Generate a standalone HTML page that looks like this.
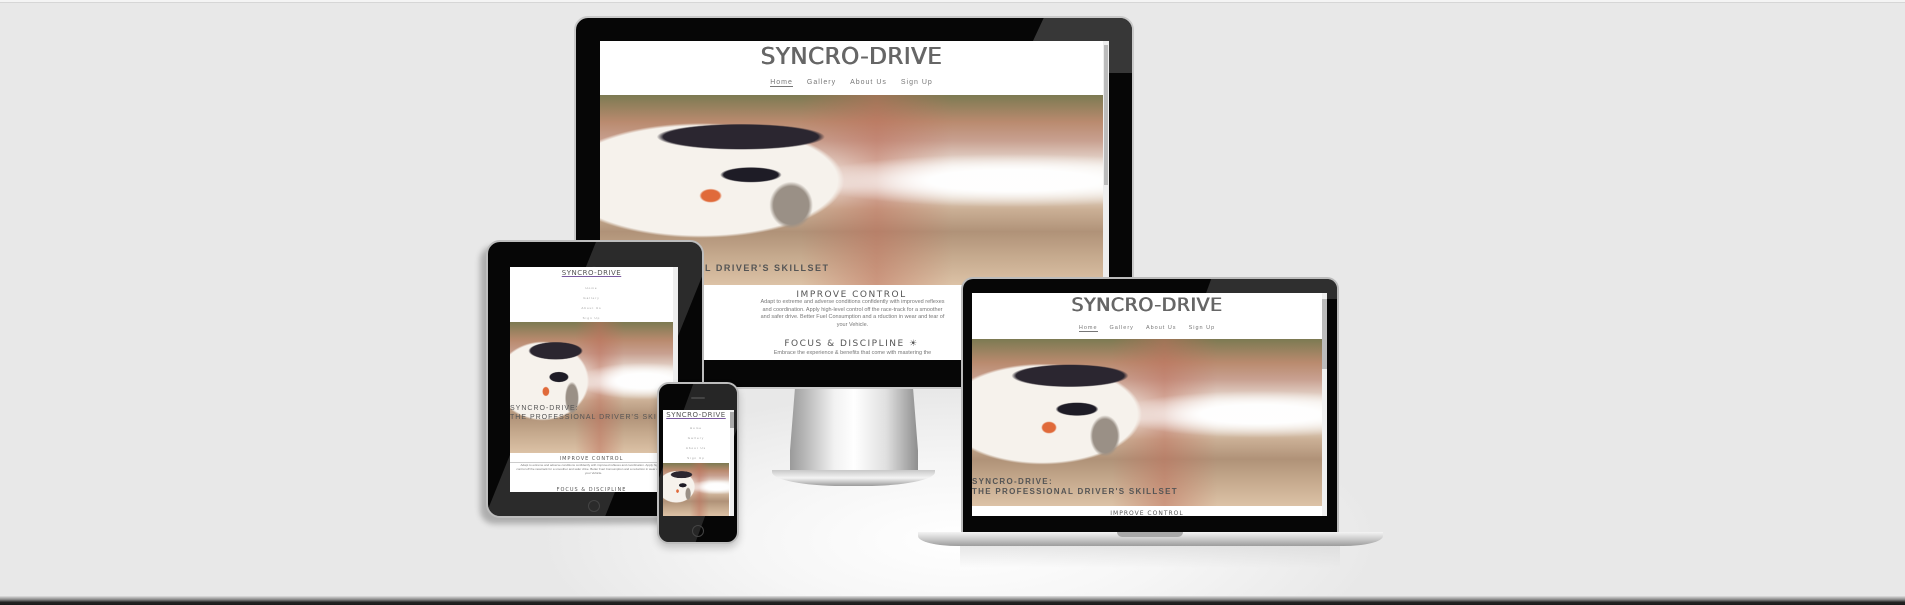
<!DOCTYPE html>
<html><head><meta charset="utf-8"><style>
*{margin:0;padding:0;box-sizing:border-box}
body{width:1905px;height:605px;overflow:hidden;position:relative;font-family:"Liberation Sans",sans-serif;
background:radial-gradient(ellipse 420px 150px at 960px 540px,#ffffff 0%,#f6f6f6 50%,rgba(232,232,232,0) 100%),#e8e8e8}
.a{position:absolute}
.topline{left:0;top:0;width:1905px;height:3px;background:#f4f4f4;border-bottom:1px solid #d6d6d6}
.bot{left:0;top:596px;width:1905px;height:9px;background:linear-gradient(#e0e0e0,#888 40%,#222 70%,#1a1a1a)}
.hero{position:absolute;overflow:hidden;
background:
radial-gradient(ellipse 3% 5% at 22% 53%,#e06a3a 60%,transparent 75%),
radial-gradient(ellipse 9% 6% at 30% 42%,#1e1c26 60%,transparent 68%),
radial-gradient(ellipse 22% 9% at 28% 22%,#2b2630 70%,transparent 76%),
radial-gradient(ellipse 7% 20% at 38% 58%,#9a9086 50%,transparent 62%),
radial-gradient(ellipse 34% 36% at 20% 45%,#f6f2ec 80%,transparent 84%),
radial-gradient(ellipse 42% 14% at 82% 45%,rgba(255,255,255,.97) 40%,rgba(255,255,255,0) 100%),
linear-gradient(90deg,rgba(0,0,0,0) 40%,rgba(190,110,90,.5) 55%,rgba(0,0,0,0) 70%),
linear-gradient(180deg,#7c7a52 0%,#b98a6e 14%,#c8a090 24%,#eee6de 38%,#f4efe9 48%,#cbb096 60%,#b09278 72%,#c4a88c 84%,#dcc2a6 100%)}
.ttl{color:#666;text-align:center;font-family:"DejaVu Sans",sans-serif;letter-spacing:.5px;white-space:nowrap}
.big{text-shadow:.5px 0 0 #666,-.3px 0 0 #666}
.nav{color:#777;text-align:center;letter-spacing:1px;white-space:nowrap}
.nav span{display:inline-block}
</style></head><body>
<div class="a topline"></div>

<!-- monitor stand -->
<div class="a" style="left:790px;top:386px;width:128px;height:86px;background:linear-gradient(90deg,#9a9a9a,#f2f2f2 35%,#fff 50%,#e0e0e0 75%,#8e8e8e);clip-path:polygon(4% 0,96% 0,100% 75%,114% 100%,-14% 100%,0 75%)"></div>
<div class="a" style="left:772px;top:470px;width:163px;height:16px;border-radius:0 0 70px 70px/0 0 14px 14px;background:linear-gradient(#c8c8c8,#f4f4f4 50%,#9a9a9a)"></div>
<!-- monitor -->
<div class="a" style="left:574px;top:16px;width:560px;height:373px;border-radius:14px 14px 4px 4px;background:#060606;border:2px solid #c9c9c9;overflow:hidden">
 <div class="a" style="left:470px;top:-5px;width:130px;height:60px;background:rgba(58,58,58,.95);transform:skewX(-25deg);transform-origin:top"></div>
</div>
<div class="a" style="left:600px;top:41px;width:509px;height:319px;background:#fff;overflow:hidden">
 <div class="a ttl big" style="left:0;top:3px;width:503px;font-size:23px">SYNCRO-DRIVE</div>
 <div class="a nav" style="left:0;top:38px;width:503px;font-size:7px"><span style="border-bottom:1px solid #777;margin-right:14px">Home</span><span style="margin-right:14px">Gallery</span><span style="margin-right:14px">About Us</span><span>Sign Up</span></div>
 <div class="hero" style="left:0;top:54px;width:503px;height:190px"></div>
 <div class="a" style="left:105px;top:222px;font-size:9px;color:#555;letter-spacing:1.5px;font-weight:bold">L DRIVER'S SKILLSET</div>
 <div class="a ttl" style="left:0;top:249px;width:503px;font-size:9px;letter-spacing:1.5px;color:#555">IMPROVE CONTROL</div>
 <div class="a" style="left:160px;top:258px;width:185px;font-size:5.5px;color:#777;text-align:center;line-height:7.5px">Adapt to extreme and adverse conditions confidently with improved reflexes and coordination. Apply high-level control off the race-track for a smoother and safer drive. Better Fuel Consumption and a rduction in wear and tear of your Vehicle.</div>
 <div class="a ttl" style="left:0;top:298px;width:503px;font-size:9px;letter-spacing:1.5px;color:#555">FOCUS &amp; DISCIPLINE ☀</div>
 <div class="a" style="left:150px;top:309px;width:205px;font-size:5.5px;color:#777;text-align:center">Embrace the experience &amp; benefits that come with mastering the</div>
 <div class="a" style="left:503px;top:0;width:6px;height:319px;background:#eee"><div style="margin:4px 1px;height:140px;background:#bbb"></div></div>
</div>

<!-- tablet -->
<div class="a" style="left:486px;top:240px;width:218px;height:278px;border-radius:14px;background:#060606;border:2px solid #bdbdbd;box-shadow:-6px 6px 6px rgba(0,0,0,.25);overflow:hidden">
 <div class="a" style="left:110px;top:-5px;width:120px;height:290px;background:rgba(60,60,60,.7);transform:skewX(-22deg);transform-origin:top"></div>
 <div class="a" style="left:104px;top:24px;width:4px;height:4px;border-radius:50%;background:#333"></div>
 <div class="a" style="left:100px;top:258px;width:12px;height:12px;border-radius:50%;border:1px solid #444"></div>
</div>
<div class="a" style="left:510px;top:267px;width:168px;height:225px;background:#fff;overflow:hidden">
 <div class="a ttl" style="left:0;top:2px;width:163px;font-size:7px;color:#555;text-decoration:underline;text-decoration-color:#7a5aa0">SYNCRO-DRIVE</div>
 <div class="a nav" style="left:0;top:16px;width:163px;font-size:3px;line-height:10px;color:#999">Home<br>Gallery<br>About Us<br>Sign Up</div>
 <div class="hero" style="left:0;top:55px;width:163px;height:131px"></div>
 <div class="a" style="left:0;top:137px;font-size:7px;color:#555;letter-spacing:1px;line-height:9px;white-space:nowrap">SYNCRO-DRIVE:<br>THE PROFESSIONAL DRIVER'S SKILLSET</div>
 <div class="a ttl" style="left:0;top:189px;width:163px;font-size:5px;color:#555;letter-spacing:1px;border-bottom:1px solid #ccc">IMPROVE CONTROL</div>
 <div class="a" style="left:6px;top:196px;width:155px;font-size:3px;color:#777;text-align:center;line-height:4px">Adapt to extreme and adverse conditions confidently with improved reflexes and coordination. Apply high-level control off the racetrack for a smoother and safer drive. Better Fuel Consumption and a reduction in wear and tear of your Vehicle.</div>
 <div class="a ttl" style="left:0;top:220px;width:163px;font-size:5px;color:#555;letter-spacing:1px">FOCUS &amp; DISCIPLINE</div>
 <div class="a" style="left:163px;top:0;width:5px;height:225px;background:#eee"></div>
</div>

<!-- phone -->
<div class="a" style="left:657px;top:382px;width:82px;height:162px;border-radius:12px;background:#060606;border:2px solid #bdbdbd;box-shadow:0 4px 8px rgba(0,0,0,.2);overflow:hidden">
 <div class="a" style="left:36px;top:-5px;width:60px;height:175px;background:rgba(60,60,60,.6);transform:skewX(-20deg);transform-origin:top"></div>
 <div class="a" style="left:32px;top:13px;width:14px;height:2px;background:#444;border-radius:1px"></div>
 <div class="a" style="left:33px;top:141px;width:12px;height:12px;border-radius:50%;border:1px solid #444"></div>
</div>
<div class="a" style="left:663px;top:410px;width:71px;height:106px;background:#fff;overflow:hidden">
 <div class="a ttl" style="left:0;top:1px;width:66px;font-size:7px;color:#555;text-decoration:underline;text-decoration-color:#7a5aa0">SYNCRO-DRIVE</div>
 <div class="a nav" style="left:0;top:13px;width:66px;font-size:3px;line-height:10px;color:#999">Home<br>Gallery<br>About Us<br>Sign Up</div>
 <div class="hero" style="left:0;top:53px;width:66px;height:53px"></div>
 <div class="a" style="left:67px;top:0;width:4px;height:106px;background:#eee"><div style="height:16px;margin-top:2px;background:#aaa"></div></div>
</div>

<!-- laptop -->
<div class="a" style="left:961px;top:277px;width:378px;height:256px;border-radius:12px 12px 0 0;background:#060606;border:2px solid #bbb;border-bottom:none;overflow:hidden">
 <div class="a" style="left:250px;top:-5px;width:160px;height:25px;background:rgba(55,55,55,.85);transform:skewX(-20deg);transform-origin:top"></div>
</div>
<div class="a" style="left:972px;top:293px;width:355px;height:223px;background:#fff;overflow:hidden">
 <div class="a ttl big" style="left:0;top:1px;width:350px;font-size:19px">SYNCRO-DRIVE</div>
 <div class="a nav" style="left:0;top:32px;width:350px;font-size:5.5px"><span style="border-bottom:1px solid #777;margin-right:12px">Home</span><span style="margin-right:12px">Gallery</span><span style="margin-right:12px">About Us</span><span>Sign Up</span></div>
 <div class="hero" style="left:0;top:46px;width:350px;height:167px"></div>
 <div class="a" style="left:0;top:184px;font-size:8px;color:#555;letter-spacing:1.3px;line-height:10px;font-weight:bold;white-space:nowrap">SYNCRO-DRIVE:<br>THE PROFESSIONAL DRIVER'S SKILLSET</div>
 <div class="a ttl" style="left:0;top:217px;width:350px;font-size:6px;color:#555;letter-spacing:1px">IMPROVE CONTROL</div>
 <div class="a" style="left:350px;top:0;width:5px;height:223px;background:#f0f0f0"><div style="height:70px;margin-top:6px;background:#bbb"></div></div>
</div>
<div class="a" style="left:918px;top:532px;width:465px;height:14px;border-radius:0 0 40px 40px/0 0 10px 10px;background:linear-gradient(#f4f4f4,#d4d4d4 40%,#9c9c9c)"></div>
<div class="a" style="left:1117px;top:532px;width:66px;height:5px;border-radius:0 0 6px 6px;background:#a8a8a8"></div>
<div class="a" style="left:960px;top:546px;width:380px;height:22px;background:linear-gradient(rgba(215,215,215,.6),rgba(232,232,232,0))"></div>

<div class="a bot"></div>
</body></html>
